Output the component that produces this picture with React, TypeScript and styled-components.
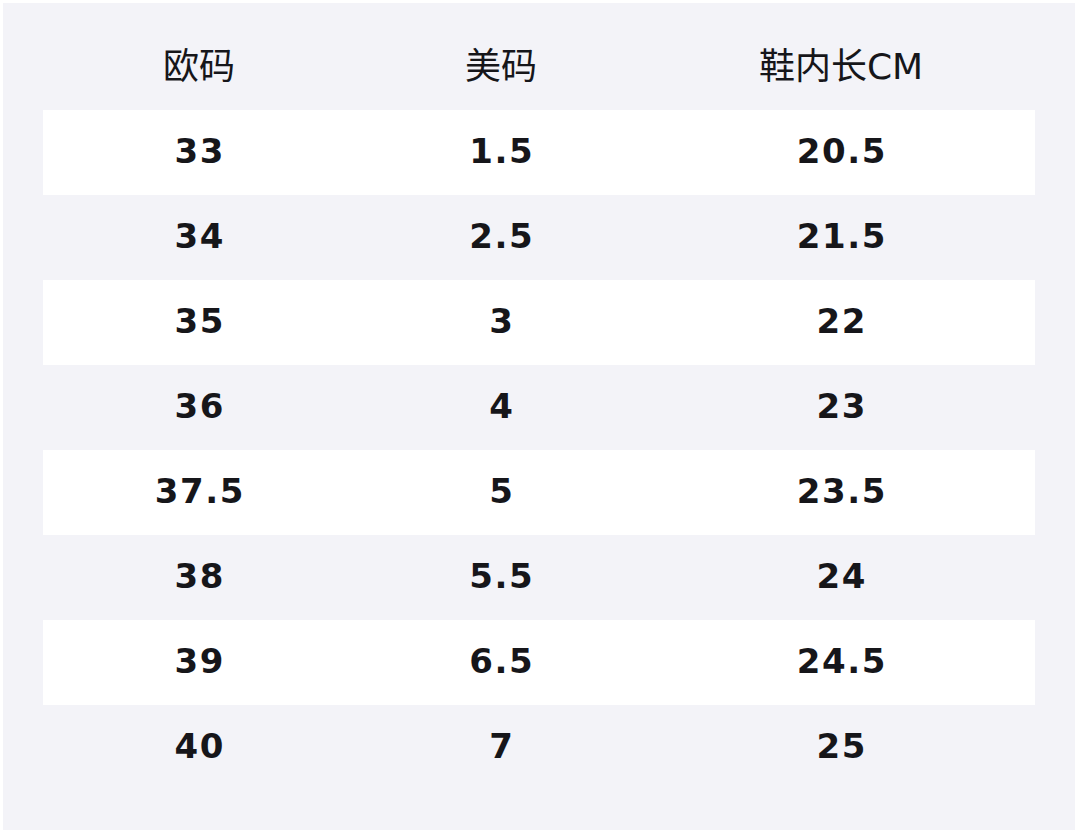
import styled, { createGlobalStyle } from 'styled-components'

const GlobalStyle = createGlobalStyle`
  html, body {
    margin: 0;
    padding: 0;
    background: #ffffff;
  }
  * {
    box-sizing: border-box;
  }
`

const sizes = [
  ['33', '1.5', '20.5'],
  ['34', '2.5', '21.5'],
  ['35', '3', '22'],
  ['36', '4', '23'],
  ['37.5', '5', '23.5'],
  ['38', '5.5', '24'],
  ['39', '6.5', '24.5'],
  ['40', '7', '25'],
]

const Panel = styled.div`
  margin: 3px;
  width: 1072px;
  height: 827px;
  background: #f3f3f8;
  padding: 0 40px 40px;
  font-family: 'DejaVu Sans', 'Noto Sans CJK SC', sans-serif;
  color: #16161a;
`

const Row = styled.div<{ $striped?: boolean; $header?: boolean }>`
  display: grid;
  grid-template-columns: 312px 292px 388px;
  align-items: center;
  height: ${(p) => (p.$header ? '107px' : '85px')};
  padding-top: ${(p) => (p.$header ? '12px' : '0')};
  background: ${(p) => (p.$striped ? '#ffffff' : 'transparent')};
`

const HeadCell = styled.div`
  text-align: center;
  font-size: 36px;
  font-weight: 400;
`

const Cell = styled.div`
  text-align: center;
  font-size: 34px;
  font-weight: 700;
  letter-spacing: 1.6px;
  padding: 0 0 3px 1.6px;
`

export default function App() {
  return (
    <>
      <GlobalStyle />
      <Panel>
        <Row $header>
          <HeadCell>欧码</HeadCell>
          <HeadCell>美码</HeadCell>
          <HeadCell>鞋内长CM</HeadCell>
        </Row>
        {sizes.map(([eu, us, cm], i) => (
          <Row key={eu} $striped={i % 2 === 0}>
            <Cell>{eu}</Cell>
            <Cell>{us}</Cell>
            <Cell>{cm}</Cell>
          </Row>
        ))}
      </Panel>
    </>
  )
}
